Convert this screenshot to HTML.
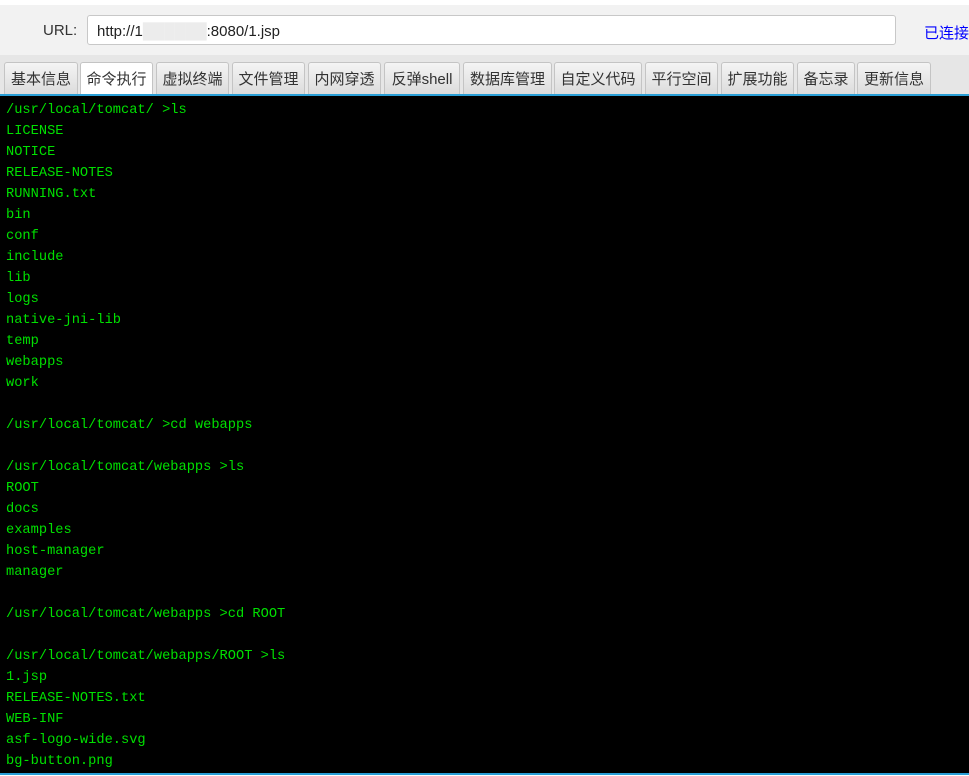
<!DOCTYPE html>
<html><head><meta charset="utf-8"><style>
*{margin:0;padding:0;box-sizing:border-box}
body{width:969px;height:776px;overflow:hidden;background:#fff;font-family:"Liberation Sans","Noto Sans CJK SC",sans-serif}
.top{position:absolute;left:0;top:5px;width:969px;height:50px;background:#f2f2f2}
.lbl{position:absolute;left:43px;top:22px;font-size:15px;color:#333}
.url{position:absolute;left:87px;top:15px;width:809px;height:30px;background:#fff;border:1px solid #c8c8c8;border-radius:3px;font-size:15px;color:#222;padding:7px 9px}
.st{position:absolute;left:924px;top:22px;font-size:15px;color:#0000ff;white-space:nowrap}
.tabbar{position:absolute;left:0;top:55px;width:969px;height:40px;background:#e6e6e6}
.tab{position:absolute;top:7px;height:32px;border:1px solid #c4c4c4;border-bottom:none;border-radius:3px 3px 0 0;background:linear-gradient(#f4f4f4,#dcdcdc);font-size:15px;color:#333;text-align:center;line-height:33px;white-space:nowrap}
.tab.a{background:#fff;height:33px}
.term{position:absolute;left:0;top:94px;width:969px;height:681px;background:#000;border-top:2px solid #2a9fd6;border-bottom:2px solid #2a9fd6}
pre{position:absolute;left:6px;top:4px;font-family:"Liberation Mono",monospace;font-size:13.7px;line-height:21px;color:#00e000}
</style></head><body>
<div class="top"></div>
<div class="lbl">URL:</div>
<div class="url">http://1<span style="color:#ececec">██████</span>:8080/1.jsp</div>
<div class="st">已连接</div>
<div class="tabbar">
<div class="tab" style="left:4px;width:74px">基本信息</div>
<div class="tab a" style="left:80px;width:73px">命令执行</div>
<div class="tab" style="left:156px;width:73px">虚拟终端</div>
<div class="tab" style="left:232px;width:73px">文件管理</div>
<div class="tab" style="left:308px;width:73px">内网穿透</div>
<div class="tab" style="left:384px;width:76px">反弹shell</div>
<div class="tab" style="left:463px;width:89px">数据库管理</div>
<div class="tab" style="left:554px;width:88px">自定义代码</div>
<div class="tab" style="left:645px;width:73px">平行空间</div>
<div class="tab" style="left:721px;width:73px">扩展功能</div>
<div class="tab" style="left:797px;width:58px">备忘录</div>
<div class="tab" style="left:857px;width:74px">更新信息</div>
</div>
<div class="term"><pre>/usr/local/tomcat/ &gt;ls
LICENSE
NOTICE
RELEASE-NOTES
RUNNING.txt
bin
conf
include
lib
logs
native-jni-lib
temp
webapps
work

/usr/local/tomcat/ &gt;cd webapps

/usr/local/tomcat/webapps &gt;ls
ROOT
docs
examples
host-manager
manager

/usr/local/tomcat/webapps &gt;cd ROOT

/usr/local/tomcat/webapps/ROOT &gt;ls
1.jsp
RELEASE-NOTES.txt
WEB-INF
asf-logo-wide.svg
bg-button.png</pre></div>
</body></html>
